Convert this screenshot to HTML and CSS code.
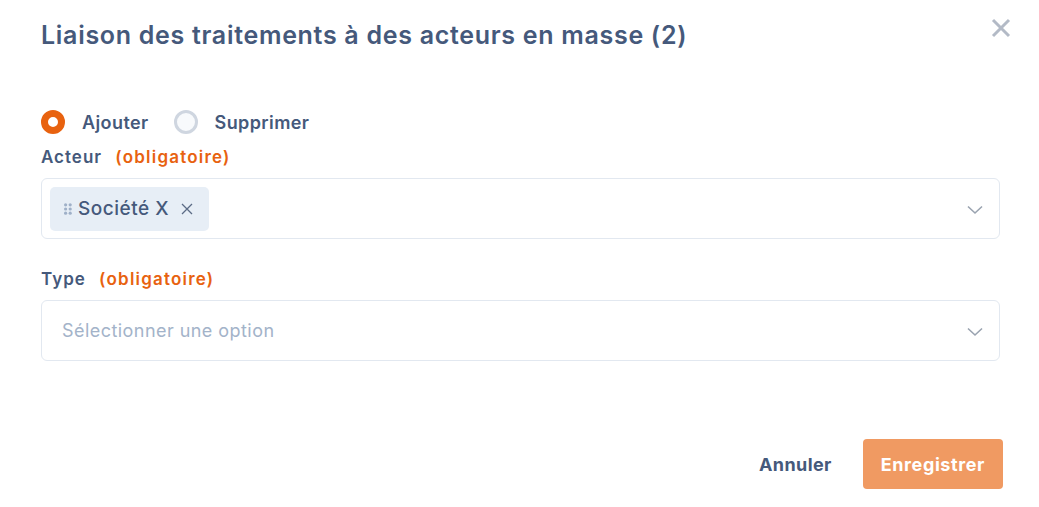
FILE: index.html
```html
<!DOCTYPE html>
<html lang="fr">
<head>
<meta charset="utf-8">
<link rel="stylesheet" href="styles.css">
</head>
<body>
<div class="modal">
  <header class="modal-head">
    <h1 class="title">Liaison des traitements à des acteurs en masse (2)</h1>
    <button class="close" aria-label="Fermer">
      <svg width="20" height="20" viewBox="0 0 20 20"><path d="M2 2 L18 18 M18 2 L2 18" stroke="#b3bac6" stroke-width="3" stroke-linecap="butt"/></svg>
    </button>
  </header>

  <div class="radios">
    <label class="radio"><span class="dot dot-on"></span><span class="radio-text">Ajouter</span></label>
    <label class="radio"><span class="dot"></span><span class="radio-text">Supprimer</span></label>
  </div>

  <div class="field">
    <div class="label">Acteur <span class="req">(obligatoire)</span></div>
    <div class="select">
      <span class="tag">
        <svg class="grip" width="8" height="12" viewBox="0 0 8 12"><g fill="#9fb0c8"><circle cx="1.6" cy="1.8" r="1.6"/><circle cx="6.2" cy="1.8" r="1.6"/><circle cx="1.6" cy="6" r="1.6"/><circle cx="6.2" cy="6" r="1.6"/><circle cx="1.6" cy="10.2" r="1.6"/><circle cx="6.2" cy="10.2" r="1.6"/></g></svg>
        <span class="tag-text">Société X</span>
        <svg class="tag-x" width="12" height="12" viewBox="0 0 12 12"><path d="M1 1 L11 11 M11 1 L1 11" stroke="#5b6b85" stroke-width="1.3"/></svg>
      </span>
      <svg class="chev" width="16" height="10" viewBox="0 0 16 10"><path d="M1 1.5 L8 8 L15 1.5" fill="none" stroke="#9aa3b0" stroke-width="1.6"/></svg>
    </div>
  </div>

  <div class="field field-type">
    <div class="label">Type <span class="req">(obligatoire)</span></div>
    <div class="select">
      <span class="placeholder">Sélectionner une option</span>
      <svg class="chev" width="16" height="10" viewBox="0 0 16 10"><path d="M1 1.5 L8 8 L15 1.5" fill="none" stroke="#9aa3b0" stroke-width="1.6"/></svg>
    </div>
  </div>

  <footer class="actions">
    <button class="btn-cancel">Annuler</button>
    <button class="btn-save">Enregistrer</button>
  </footer>
</div>
</body>
</html>
```
FILE: styles.css
```css
* { box-sizing: border-box; }
html, body { margin: 0; padding: 0; background: #fff; }
body { font-family: "Inter", "Noto Sans", sans-serif; color: #45597b; }
.modal { width: 1039px; height: 507px; padding: 18px 39px 0 41px; }
.modal-head { display: flex; justify-content: space-between; align-items: flex-start; }
.title { margin: 0; font-size: 25px; font-weight: 600; line-height: 34px; color: #45597b; letter-spacing: 0.7px; }
.close { border: 0; background: none; padding: 0; margin-top: 0; margin-right: -11px; width: 20px; height: 20px; }
.radios { display: flex; gap: 25px; margin-top: 58px; }
.radio { display: flex; align-items: center; gap: 17px; font-size: 18px; font-weight: 600; height: 24px; letter-spacing: 0.4px; }
.dot { width: 24px; height: 24px; border-radius: 50%; border: 3px solid #cfd6e0; background: #f8fafc; }
.dot-on { border: 7px solid #e8620f; background: #fff; }
.label { font-size: 17px; font-weight: 600; line-height: 22px; color: #45597b; letter-spacing: 1px; }
.req { color: #e8620f; margin-left: 8px; font-weight: 600; letter-spacing: 1.2px; }
.field { margin-top: 12px; }
.field-type { margin-top: 29px; }
.select { margin-top: 10px; height: 61px; border: 1px solid #e2e8f0; border-radius: 6px; display: flex; align-items: center; justify-content: space-between; padding: 0 16px 0 8px; }
.tag { display: inline-flex; align-items: center; height: 44px; background: #e7eef6; border-radius: 5px; padding: 0 16px 0 14px; }
.grip { margin-right: 6px; }
.tag-text { font-size: 19px; font-weight: 500; color: #45597b; letter-spacing: 0.5px; }
.tag-x { margin-left: 12px; }
.placeholder { font-size: 18px; color: #a3b3c9; padding-left: 12px; letter-spacing: 0.45px; }
.chev { margin-top: 2px; }
.actions { display: flex; justify-content: flex-end; align-items: center; gap: 31px; margin-top: 78px; margin-right: -3px; }
.btn-cancel { border: 0; background: none; font-family: inherit; font-size: 18px; font-weight: 700; color: #45597b; padding: 0; letter-spacing: 0.4px; }
.btn-save { border: 0; background: #f09a62; color: #fff; font-family: inherit; font-size: 18px; font-weight: 700; height: 50px; padding: 0 18px; border-radius: 4px; letter-spacing: 0.6px; }
```
